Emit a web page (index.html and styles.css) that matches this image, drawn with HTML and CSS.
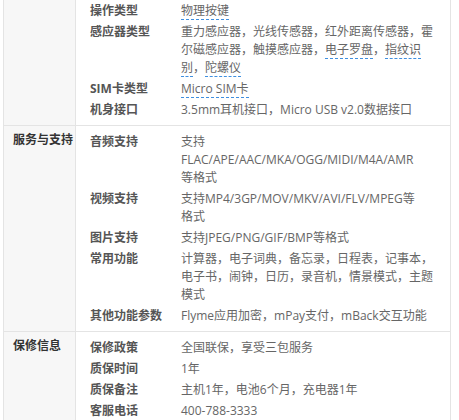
FILE: index.html
```html
<!DOCTYPE html>
<html lang="zh-CN">
<head>
<meta charset="utf-8">
<title>规格参数</title>
<link rel="stylesheet" href="styles.css">
</head>
<body>
<div class="specs">
  <section class="group group--cut">
    <div class="group-title"></div>
    <dl class="rows">
      <div class="row"><dt>操作类型</dt><dd><span class="link">物理按键</span></dd></div>
      <div class="row"><dt>感应器类型</dt><dd>重力感应器，光线传感器，红外距离传感器，霍<br>尔磁感应器，触摸感应器，<span class="link">电子罗盘</span>，<span class="link">指纹识<br>别</span>，<span class="link">陀螺仪</span></dd></div>
      <div class="row"><dt>SIM卡类型</dt><dd><span class="link">Micro SIM卡</span></dd></div>
      <div class="row"><dt>机身接口</dt><dd>3.5mm耳机接口，Micro USB v2.0数据接口</dd></div>
    </dl>
  </section>
  <section class="group">
    <div class="group-title">服务与支持</div>
    <dl class="rows">
      <div class="row"><dt>音频支持</dt><dd>支持<br>FLAC/APE/AAC/MKA/OGG/MIDI/M4A/AMR<br>等格式</dd></div>
      <div class="row"><dt>视频支持</dt><dd>支持MP4/3GP/MOV/MKV/AVI/FLV/MPEG等<br>格式</dd></div>
      <div class="row"><dt>图片支持</dt><dd>支持JPEG/PNG/GIF/BMP等格式</dd></div>
      <div class="row"><dt>常用功能</dt><dd>计算器，电子词典，备忘录，日程表，记事本，<br>电子书，闹钟，日历，录音机，情景模式，主题<br>模式</dd></div>
      <div class="row"><dt>其他功能参数</dt><dd>Flyme应用加密，mPay支付，mBack交互功能</dd></div>
    </dl>
  </section>
  <section class="group">
    <div class="group-title">保修信息</div>
    <dl class="rows">
      <div class="row"><dt>保修政策</dt><dd>全国联保，享受三包服务</dd></div>
      <div class="row"><dt>质保时间</dt><dd>1年</dd></div>
      <div class="row"><dt>质保备注</dt><dd>主机1年，电池6个月，充电器1年</dd></div>
      <div class="row"><dt>客服电话</dt><dd>400-788-3333</dd></div>
    </dl>
  </section>
</div>
</body>
</html>
```
FILE: styles.css
```css
html, body {
  margin: 0;
  padding: 0;
  background: #fff;
}

body {
  font-family: "Open Sans", "Noto Sans CJK SC", sans-serif;
  font-size: 12px;
  line-height: 18px;
  color: #666;
}

.specs {
  margin-left: 3px;
  width: 446px;
  border-left: 1px solid #e4e4e4;
  border-right: 1px solid #e4e4e4;
}

.group {
  display: grid;
  grid-template-columns: 72px 1fr;
  border-bottom: 1px solid #e4e4e4;
}

.group-title {
  background: #f7f7f7;
  border-right: 1px solid #e4e4e4;
  padding: 5px 0 0 9px;
  font-weight: bold;
  color: #333;
}

.rows {
  margin: 0;
  padding: 7px 0 6px;
  display: flex;
  flex-direction: column;
  gap: 3px;
}

.group--cut .rows {
  padding-top: 2px;
}

.row {
  display: flex;
}

.row dt {
  width: 91px;
  padding-left: 14px;
  flex: none;
  font-weight: bold;
  color: #555;
}

.row dd {
  margin: 0;
  white-space: nowrap;
}

.link {
  border-bottom: 1px dashed #3f8fdf;
}
```
